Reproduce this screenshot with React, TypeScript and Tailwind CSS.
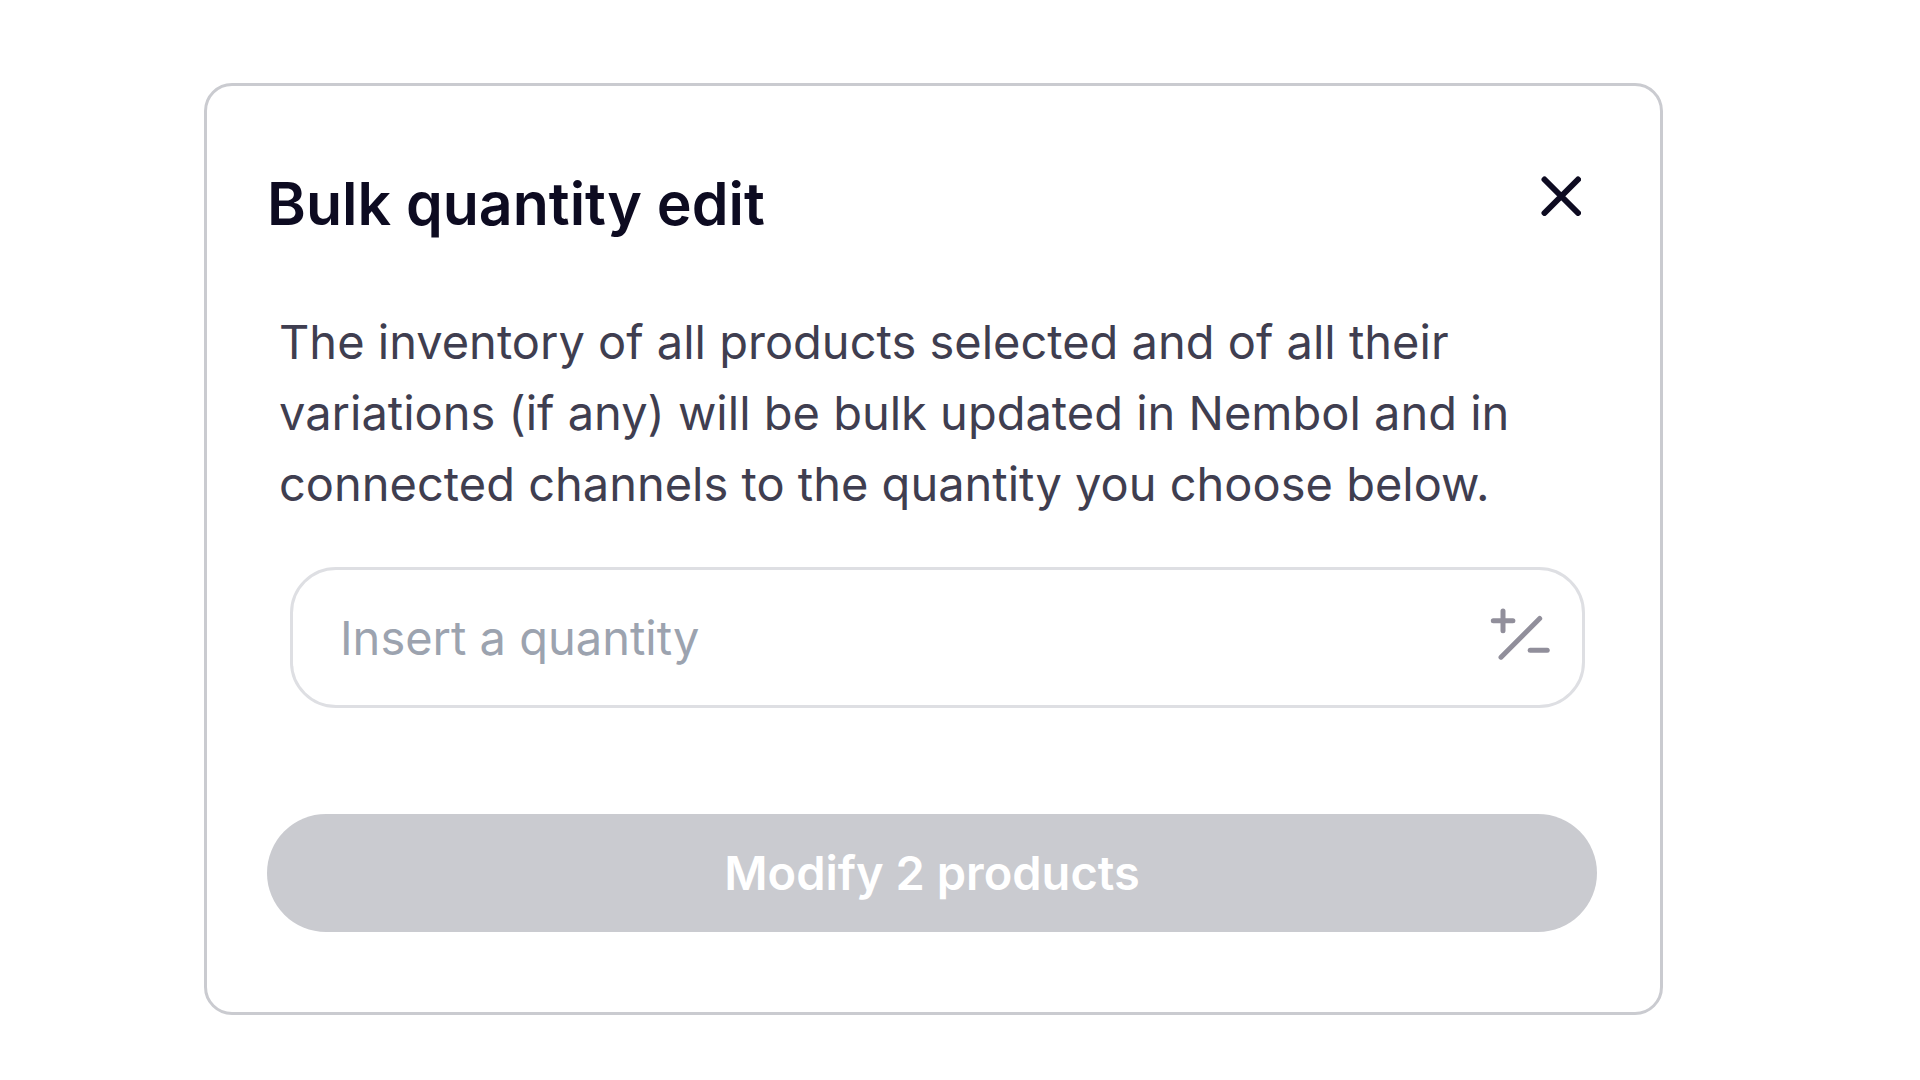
import { useState, ChangeEvent, FormEvent } from 'react';

interface BulkQuantityDialogProps {
  productCount: number;
}

function CloseIcon() {
  return (
    <svg
      className="h-10 w-10"
      viewBox="0 0 40 40"
      fill="none"
      stroke="currentColor"
      strokeWidth="6"
      strokeLinecap="round"
      aria-hidden="true"
    >
      <path d="M3.5 3.5 37 37M37 3.5 3.5 37" />
    </svg>
  );
}

function PlusMinusIcon() {
  return (
    <svg
      className="h-[60px] w-[60px] shrink-0 text-[#918f9b]"
      viewBox="0 0 60 60"
      fill="none"
      stroke="currentColor"
      strokeWidth="5"
      strokeLinecap="round"
      aria-hidden="true"
    >
      <path d="M3.3 12.8h19.6M13 2.9v19.8" />
      <path d="M11 49.2 49.7 10.5" />
      <path d="M40.2 42.2h17" />
    </svg>
  );
}

function BulkQuantityDialog({ productCount }: BulkQuantityDialogProps) {
  const [quantity, setQuantity] = useState('');

  const handleChange = (e: ChangeEvent<HTMLInputElement>) => {
    setQuantity(e.target.value);
  };

  const handleSubmit = (e: FormEvent) => {
    e.preventDefault();
    setQuantity('');
  };

  return (
    <section
      role="dialog"
      aria-labelledby="dialog-title"
      className="rounded-[28px] border-3 border-[#cacbd0] bg-white pt-20 pr-[63px] pb-20 pl-[60px]"
    >
      {/* Header */}
      <div className="flex items-start justify-between pr-4">
        <h1 id="dialog-title" className="text-[59px] leading-[76px] font-semibold text-[#0d0b21]">
          Bulk quantity edit
        </h1>
        <button type="button" aria-label="Close" className="mt-2.5 text-[#0d0b21]">
          <CloseIcon />
        </button>
      </div>

      <form onSubmit={handleSubmit}>
        <p className="mt-16 px-3 text-[47px] leading-[71px] text-[#3f3e50]">
          The inventory of all products selected and of all their variations (if any) will be bulk
          updated in Nembol and in connected channels to the quantity you choose below.
        </p>

        {/* Quantity */}
        <div className="mt-12 mr-3 ml-[23px] flex h-[141px] items-center rounded-[46px] border-3 border-[#dedfe3] pr-8 pl-[47px]">
          <input
            type="text"
            name="quantity"
            aria-label="Quantity"
            value={quantity}
            onChange={handleChange}
            placeholder="Insert a quantity"
            className="min-w-0 flex-1 text-[47px] leading-[71px] text-[#3f3e50] outline-none placeholder:text-[#9ca3af]"
          />
          <PlusMinusIcon />
        </div>

        <button
          type="submit"
          disabled={!quantity}
          className="mt-[106px] h-[118px] w-full rounded-full bg-[#0d0b21] text-[47px] font-semibold text-white disabled:bg-[#cacbd0]"
        >
          Modify {productCount} products
        </button>
      </form>
    </section>
  );
}

export default function App() {
  return (
    <main className="min-h-screen bg-white pt-[83px] pr-[257px] pb-16 pl-[204px] font-['Inter',sans-serif]">
      <BulkQuantityDialog productCount={2} />
    </main>
  );
}
